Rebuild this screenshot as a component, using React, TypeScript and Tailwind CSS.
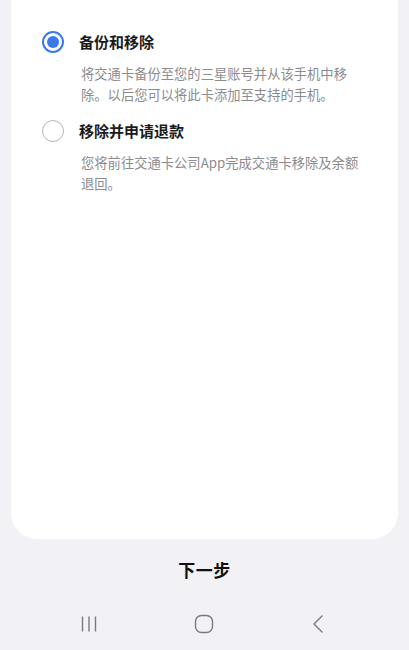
import React, { useState } from 'react';

const options = [
  {
    id: 'backup',
    title: '备份和移除',
    lines: ['将交通卡备份至您的三星账号并从该手机中移', '除。以后您可以将此卡添加至支持的手机。'],
  },
  {
    id: 'refund',
    title: '移除并申请退款',
    lines: ['您将前往交通卡公司App完成交通卡移除及余额', '退回。'],
  },
];

const Radio: React.FC<{ checked: boolean }> = ({ checked }) =>
  checked ? (
    <span className="w-[22px] h-[22px] rounded-full border-[2px] border-[#3b78ec] flex items-center justify-center shrink-0">
      <span className="w-[12px] h-[12px] rounded-full bg-[#3b78ec]" />
    </span>
  ) : (
    <span className="w-[22px] h-[22px] rounded-full border-[1.5px] border-[#b5b5b8] shrink-0" />
  );

export default function App() {
  const [selected, setSelected] = useState('backup');

  return (
    <div
      className="w-[409px] h-[650px] bg-[#f2f2f6] flex flex-col overflow-hidden"
      style={{ fontFamily: '"Noto Sans CJK SC", "Noto Sans", sans-serif' }}
    >
      <div className="mx-[11px] h-[539px] shrink-0 bg-white rounded-b-[26px] pt-[30px] pl-[31px] pr-[20px]">
        {options.map(o => (
          <div key={o.id} className="mb-[14px] cursor-pointer" onClick={() => setSelected(o.id)}>
            <div className="flex items-center h-[24px]">
              <Radio checked={selected === o.id} />
              <span className="ml-[15px] text-[15px] font-bold text-[#1b1b1b] leading-[24px]">{o.title}</span>
            </div>
            <p className="ml-[39px] mt-[10px] text-[13.3px] leading-[20.5px] text-[#8c8c8e] whitespace-nowrap">
              {o.lines.map((l, i) => (
                <React.Fragment key={i}>
                  {l}
                  {i < o.lines.length - 1 && <br />}
                </React.Fragment>
              ))}
            </p>
          </div>
        ))}
      </div>

      <div className="h-[62px] flex items-center justify-center">
        <span className="text-[17px] font-bold text-[#111] tracking-[0.5px]">下一步</span>
      </div>

      <div className="flex-1 flex items-center justify-between pl-[79px] pr-[81px] pb-[4px]">
        <svg width="20" height="20" viewBox="0 0 20 20" className="text-[#7a7a7c]">
          <path d="M3.5 2.5v15M10 2.5v15M16.5 2.5v15" stroke="currentColor" strokeWidth="1.4" />
        </svg>
        <svg width="20" height="20" viewBox="0 0 20 20" className="text-[#7a7a7c]">
          <rect x="1.5" y="1.5" width="17" height="17" rx="6" fill="none" stroke="currentColor" strokeWidth="1.4" />
        </svg>
        <svg width="20" height="20" viewBox="0 0 20 20" className="text-[#7a7a7c]">
          <path d="M14 2 L6 10 L14 18" fill="none" stroke="currentColor" strokeWidth="1.4" strokeLinecap="round" strokeLinejoin="round" />
        </svg>
      </div>
    </div>
  );
}
